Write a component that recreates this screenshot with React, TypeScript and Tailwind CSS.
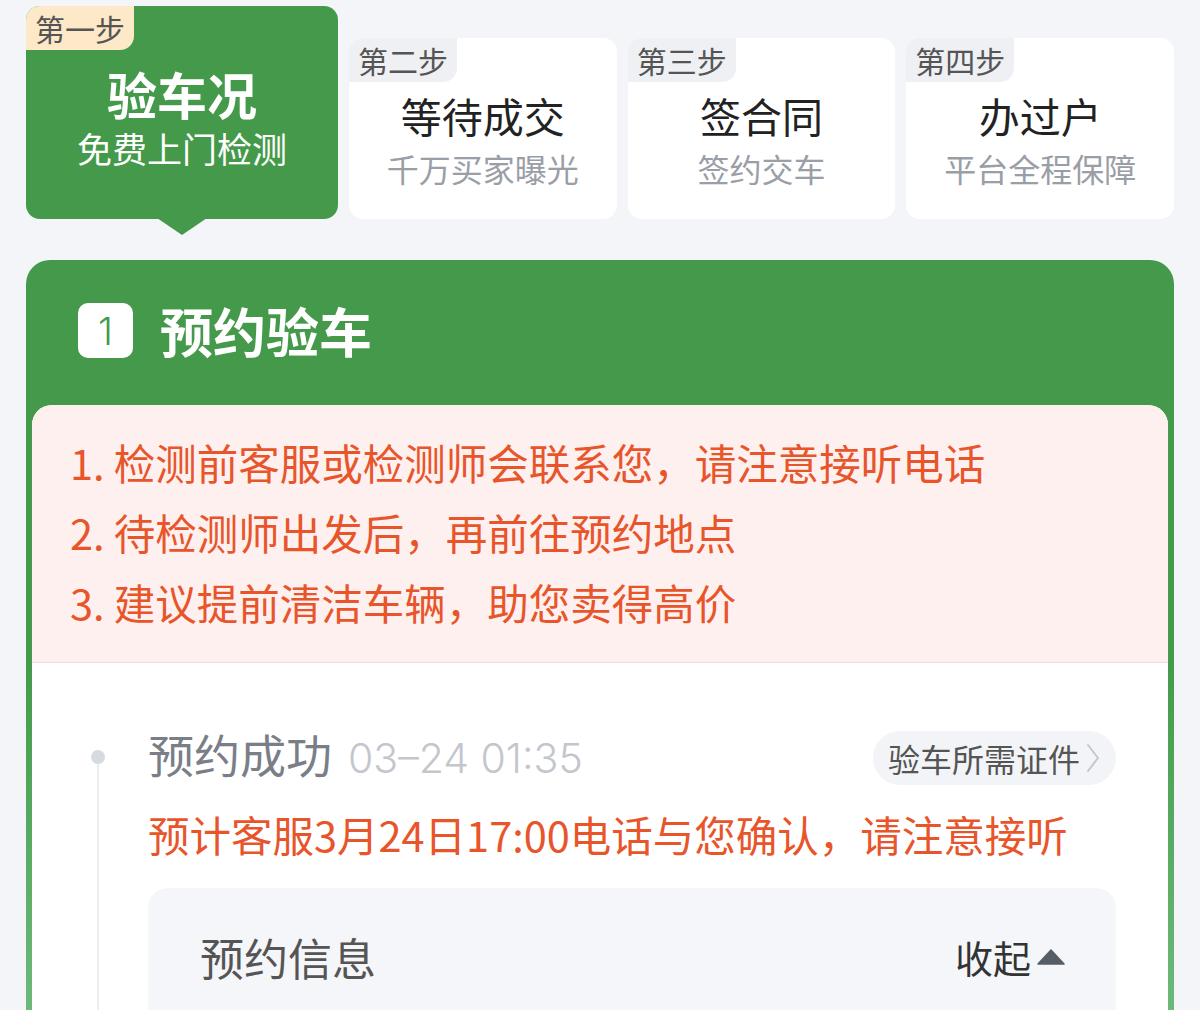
const steps = [
  { tag: "第二步", title: "等待成交", desc: "千万买家曝光" },
  { tag: "第三步", title: "签合同", desc: "签约交车" },
  { tag: "第四步", title: "办过户", desc: "平台全程保障" },
];

const tips = [
  "1. 检测前客服或检测师会联系您，请注意接听电话",
  "2. 待检测师出发后，再前往预约地点",
  "3. 建议提前清洁车辆，助您卖得高价",
];

export default function App() {
  return (
    <div className="min-h-screen bg-[#f4f5f9] px-[26px] pt-[6px] overflow-hidden font-['Noto_Sans_CJK_SC',sans-serif]">
      {/* steps */}
      <div className="flex items-end gap-[11px]">
        <div className="relative w-[312px] h-[213px] shrink-0 rounded-[14px] bg-[#449a4a] flex flex-col">
          <div className="w-[108px] h-[44px] rounded-tl-[14px] rounded-br-[14px] bg-[#fde8c8] flex items-center justify-center text-[30px] leading-none text-[#555]">
            第一步
          </div>
          <div className="mt-[17px] text-center text-[50px] leading-[52px] font-bold text-white">验车况</div>
          <div className="mt-[9px] text-center text-[35px] leading-[40px] text-white">免费上门检测</div>
          <div className="absolute left-[131px] -bottom-[16px] w-0 h-0 border-l-[25px] border-r-[25px] border-t-[17px] border-l-transparent border-r-transparent border-t-[#449a4a]" />
        </div>
        {steps.map((s) => (
          <div key={s.tag} className="flex-1 h-[181px] rounded-[14px] bg-white flex flex-col">
            <div className="w-[108px] h-[44px] rounded-tl-[14px] rounded-br-[14px] bg-[#eef0f4] flex items-center justify-center text-[30px] leading-none text-[#555]">
              {s.tag}
            </div>
            <div className="mt-[8px] text-center text-[41px] leading-[50px] text-[#222]">{s.title}</div>
            <div className="mt-[8px] text-center text-[32px] leading-[40px] text-[#9a9ea6]">{s.desc}</div>
          </div>
        ))}
      </div>

      {/* main card */}
      <div className="mt-[41px] rounded-t-[24px] bg-gradient-to-b from-[#449a4a] from-45% to-[#7cc78e] px-[6px] pb-[6px]">
        <div className="h-[145px] flex items-center pl-[46px] pb-[4px]">
          <div className="w-[55px] h-[55px] rounded-[10px] bg-white flex items-center justify-center font-['Inter',sans-serif] font-light text-[38px] leading-none text-[#449a4a]">
            1
          </div>
          <div className="ml-[27px] text-[53px] leading-none font-bold text-white">预约验车</div>
        </div>

        <div className="rounded-t-[20px] bg-white overflow-hidden">
          <div className="bg-[#fdf0ee] border-b border-[#f1ddd9] pl-[38px] pt-[22px] pb-[25px]">
            {tips.map((t) => (
              <div key={t} className="text-[41.5px] leading-[70px] text-[#e8552b]">
                {t}
              </div>
            ))}
          </div>

          <div className="flex pb-[60px]">
            <div className="ml-[59px] w-[14px] flex flex-col items-center shrink-0">
              <div className="mt-[87px] w-[14px] h-[14px] rounded-full bg-[#d6dae1]" />
              <div className="flex-1 w-[2px] bg-[#eceef1]" />
            </div>
            <div className="ml-[43px] mr-[52px] flex-1 pt-[68px]">
              <div className="h-[54px] flex items-center justify-between">
                <div className="flex items-baseline mb-[8px]">
                  <span className="text-[46px] leading-none text-[#7a7e87]">预约成功</span>
                  <span className="ml-[16px] font-['Inter',sans-serif] font-light text-[41px] leading-none text-[#c3c6cc]">03–24 01:35</span>
                </div>
                <div className="h-[54px] rounded-full bg-[#f3f4f7] flex items-center pl-[15px] pr-[16px]">
                  <span className="text-[32px] leading-none text-[#555]">验车所需证件</span>
                  <svg width="14" height="30" viewBox="0 0 14 30" className="ml-[6px]">
                    <path d="M2 2 L12 15 L2 28" fill="none" stroke="#c4c7cd" strokeWidth="2" strokeLinecap="round" strokeLinejoin="round" />
                  </svg>
                </div>
              </div>
              <div className="mt-[21px] text-[41.5px] leading-[56px] text-[#e8552b]">
                预计客服3月24日17:00电话与您确认，请注意接听
              </div>
              <div className="mt-[26px] rounded-[20px] bg-[#f5f6f9] h-[200px]">
                <div className="h-[138px] flex items-center justify-between pl-[52px] pr-[51px]">
                  <span className="text-[44px] leading-none text-[#555]">预约信息</span>
                  <div className="flex items-center">
                    <span className="text-[38px] leading-none text-[#333]">收起</span>
                    <svg width="28" height="16" viewBox="0 0 28 16" className="ml-[6px]">
                      <path d="M14 1 L27 15 L1 15 Z" fill="#555d66" strokeLinejoin="round" stroke="#555d66" strokeWidth="1.5" />
                    </svg>
                  </div>
                </div>
              </div>
            </div>
          </div>
        </div>
      </div>
    </div>
  );
}
